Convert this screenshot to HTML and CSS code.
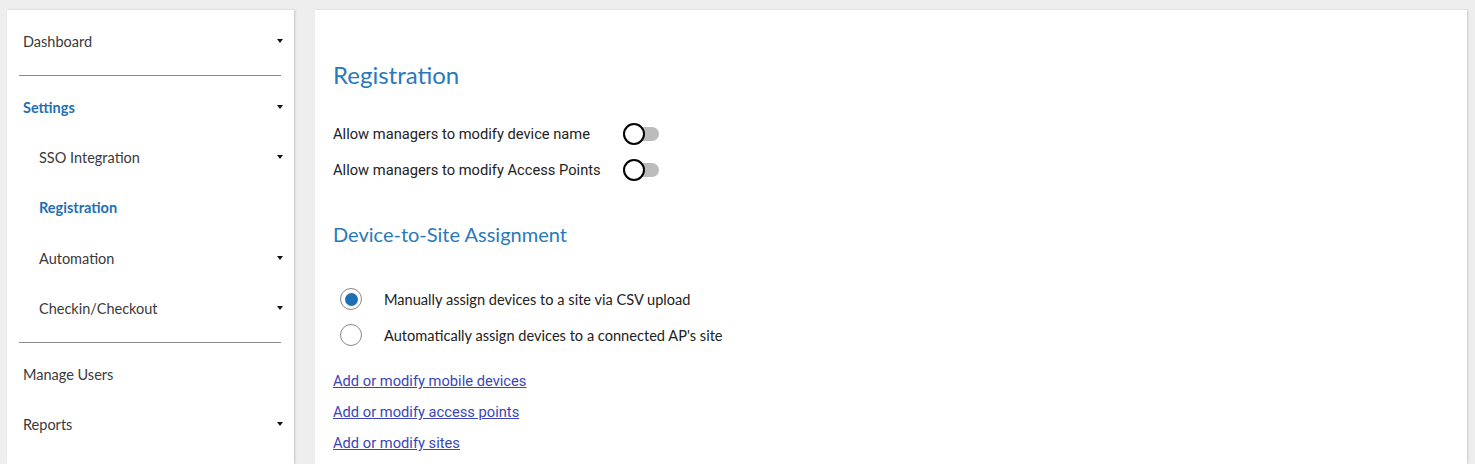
FILE: index.html
```html
<!DOCTYPE html>
<html lang="en">
<head>
<meta charset="utf-8">
<title>Registration</title>
<link rel="stylesheet" href="styles.css">
</head>
<body>
<div class="layout">
  <nav class="sidebar">
    <div class="nav-item"><span>Dashboard</span><span class="caret"></span></div>
    <hr class="divider">
    <div class="nav-item active"><span>Settings</span><span class="caret"></span></div>
    <div class="nav-item sub"><span>SSO Integration</span><span class="caret"></span></div>
    <div class="nav-item sub active tall"><span>Registration</span></div>
    <div class="nav-item sub"><span>Automation</span><span class="caret"></span></div>
    <div class="nav-item sub"><span>Checkin/Checkout</span><span class="caret"></span></div>
    <hr class="divider">
    <div class="nav-item"><span>Manage Users</span></div>
    <div class="nav-item"><span>Reports</span><span class="caret"></span></div>
  </nav>
  <main class="content">
    <h1 class="title">Registration</h1>
    <div class="toggles">
      <div class="toggle-row"><span class="toggle-label">Allow managers to modify device name</span><span class="toggle"><span class="knob"></span></span></div>
      <div class="toggle-row"><span class="toggle-label">Allow managers to modify Access Points</span><span class="toggle"><span class="knob"></span></span></div>
    </div>
    <h2 class="subtitle">Device-to-Site Assignment</h2>
    <div class="radios">
      <label class="radio-row"><span class="radio checked"></span><span>Manually assign devices to a site via CSV upload</span></label>
      <label class="radio-row"><span class="radio"></span><span>Automatically assign devices to a connected AP's site</span></label>
    </div>
    <div class="links">
      <a href="#" class="link">Add or modify mobile devices</a>
      <a href="#" class="link">Add or modify access points</a>
      <a href="#" class="link">Add or modify sites</a>
    </div>
  </main>
</div>
</body>
</html>
```
FILE: styles.css
```css
* { box-sizing: border-box; }
html, body { height: 100%; }
body {
  margin: 0;
  background: #eeeeee;
  font-family: Lato, "Liberation Sans", sans-serif;
  color: #333;
  overflow: hidden;
}
.layout {
  display: flex;
  gap: 21px;
  padding: 10px 8px 0 7px;
  height: 100%;
}
.sidebar {
  width: 287px;
  flex: none;
  background: #fff;
  padding: 6px 11px 0 0;
  box-shadow: 1px 0 2px rgba(0,0,0,0.18);
}
.nav-item {
  height: 50px;
  display: flex;
  align-items: center;
  justify-content: space-between;
  padding-left: 16px;
  font-size: 14.5px;
  color: #3a3a3a;
}
.nav-item.tall { height: 51px; }
.nav-item.sub { padding-left: 32px; }
.nav-item.active { color: #1f70b6; font-weight: 700; }
.caret {
  width: 0;
  height: 0;
  border-left: 3.5px solid transparent;
  border-right: 3.5px solid transparent;
  border-top: 4px solid #111;
}
.divider {
  border: 0;
  border-top: 1px solid #8a8a8a;
  margin: 9px 2px 6px 12px;
  height: 0;
}
.content {
  flex: 1;
  background: #fff;
  padding: 50px 18px 0;
  box-shadow: 1px 0 2px rgba(0,0,0,0.15);
}
.title {
  margin: 0;
  font-weight: 400;
  font-size: 24px;
  line-height: 30px;
  color: #2a79b9;
}
.toggles { margin-top: 26px; }
.toggle-row {
  height: 36px;
  display: grid;
  grid-template-columns: 290px auto;
  align-items: center;
  font-family: Roboto, sans-serif;
  font-size: 14.7px;
  color: #222;
}
.toggle {
  position: relative;
  width: 36px;
  height: 14px;
  background: #bcbcbc;
  border-radius: 7px;
  justify-self: start;
}
.knob {
  position: absolute;
  left: 0;
  top: -4px;
  width: 22px;
  height: 22px;
  border: 2px solid #000;
  border-radius: 50%;
  background: #fff;
}
.subtitle {
  margin: 33px 0 0;
  font-weight: 400;
  font-size: 20px;
  line-height: 26px;
  color: #2a79b9;
}
.radios { margin-top: 34px; }
.radio-row {
  height: 36px;
  display: flex;
  align-items: center;
  gap: 22px;
  padding-left: 7px;
  font-size: 14.6px;
  color: #222;
}
.radio {
  width: 22px;
  height: 22px;
  border: 1px solid #888;
  border-radius: 50%;
  display: flex;
  align-items: center;
  justify-content: center;
  flex: none;
}
.radio.checked::after {
  content: "";
  width: 13px;
  height: 13px;
  border-radius: 50%;
  background: #1f6fb4;
}
.links {
  margin-top: 13px;
  display: flex;
  flex-direction: column;
  align-items: flex-start;
}
.link {
  height: 31px;
  line-height: 31px;
  font-family: Roboto, sans-serif;
  font-size: 14.7px;
  color: #3b45b5;
  text-decoration: underline;
}
```
